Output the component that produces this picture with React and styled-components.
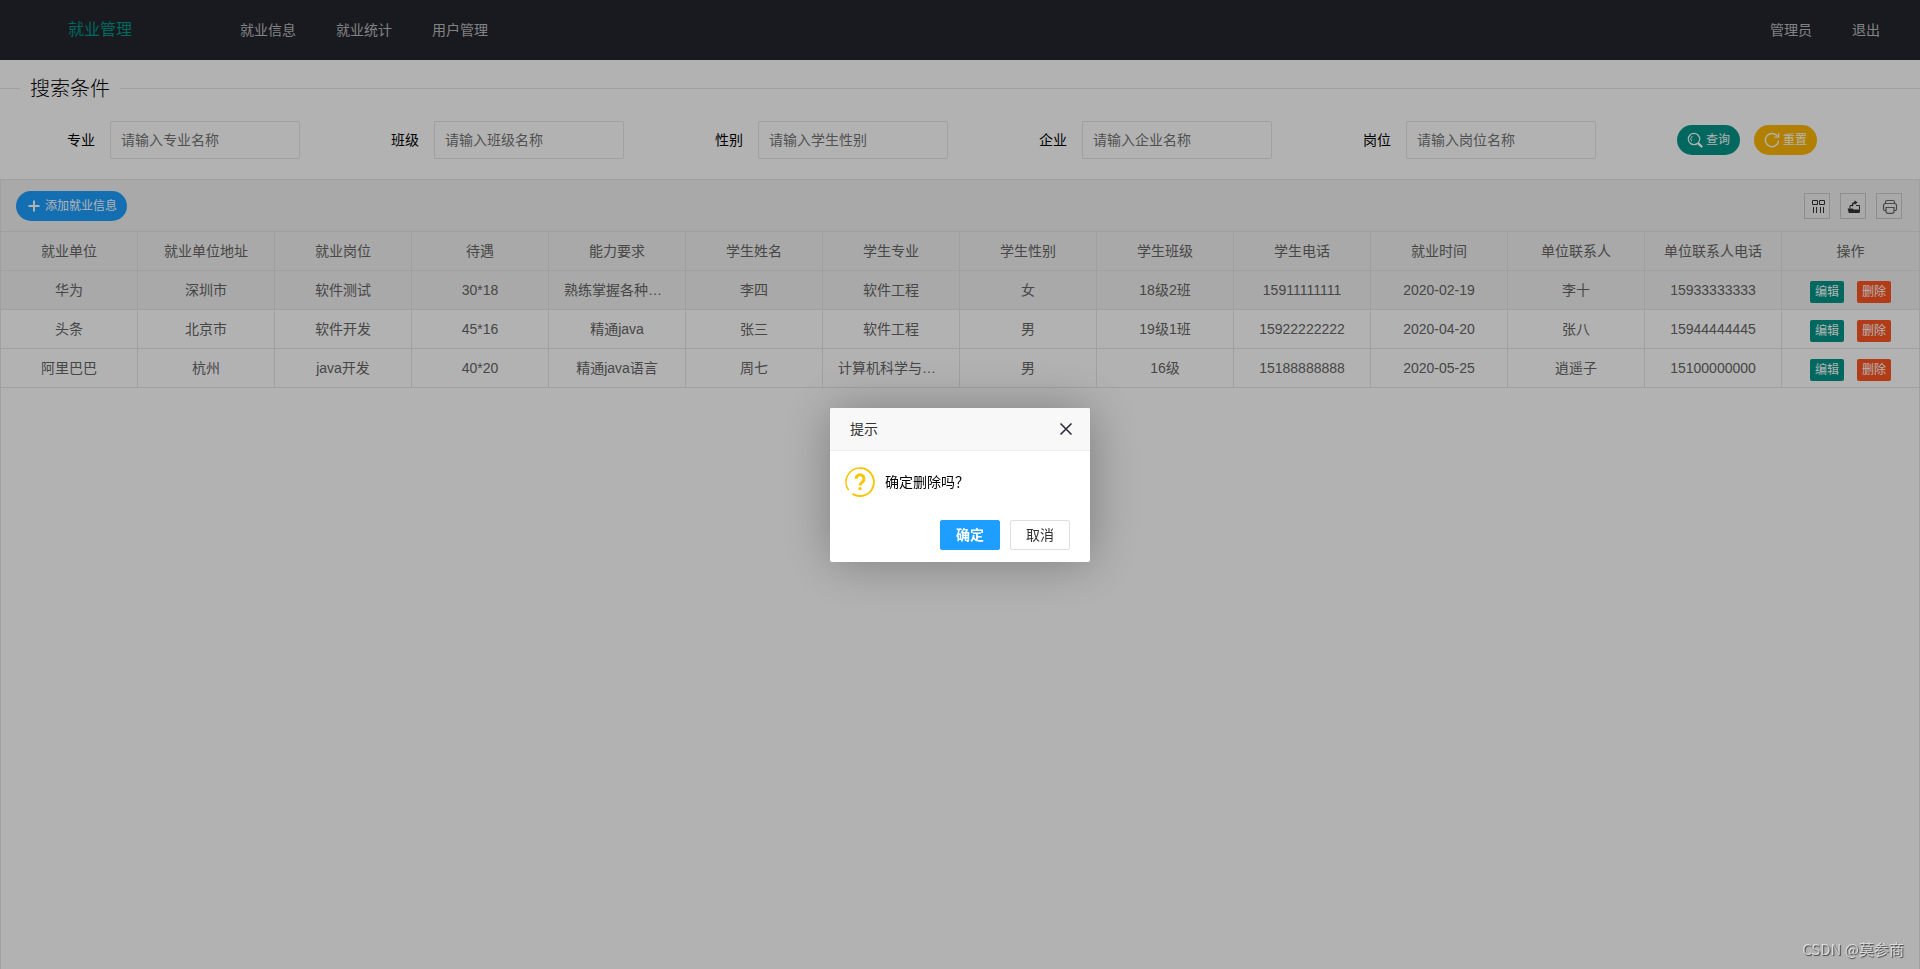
import React from "react";
import styled, { createGlobalStyle } from "styled-components";

const GlobalStyle = createGlobalStyle`
  * { box-sizing: border-box; }
  html, body { margin: 0; padding: 0; }
  body, button, input {
    font-family: "Liberation Sans", Arial, "Noto Sans CJK SC", sans-serif;
    font-size: 14px;
  }
  body { background: #fff; color: #000; line-height: 24px; overflow: hidden; }
`;

const Page = styled.div`
  display: flex;
  flex-direction: column;
  min-height: 100vh;
`;

const Header = styled.header`
  display: flex;
  align-items: center;
  height: 60px;
  flex: none;
  padding-right: 20px;
  background: #23262e;
`;

const Logo = styled.h1`
  width: 200px;
  margin: 0;
  font-size: 16px;
  font-weight: 400;
  line-height: 60px;
  text-align: center;
  color: #009688;
`;

const Nav = styled.nav`
  display: flex;
  padding-left: ${(p) => (p.$end ? 0 : 20)}px;
  margin-left: ${(p) => (p.$end ? "auto" : 0)};
`;

const NavLink = styled.a`
  padding: 0 20px;
  line-height: 60px;
  color: rgba(255, 255, 255, 0.7);
  text-decoration: none;
`;

const SearchField = styled.fieldset`
  margin: 12px 0 17px;
  padding: 0;
  border: 0;
  border-top: 1px solid #e6e6e6;
`;

const Legend = styled.legend`
  margin-left: 20px;
  padding: 2px 10px 0;
  font-size: 20px;
  font-weight: 300;
  line-height: 30px;
`;

const SearchForm = styled.form`
  display: flex;
  align-items: center;
  gap: 24px;
  margin-bottom: 20px;
`;

const Field = styled.div`
  display: flex;
  align-items: center;
`;

const FieldLabel = styled.label`
  width: 110px;
  padding: 0 15px;
  text-align: right;
`;

const TextInput = styled.input`
  width: 190px;
  height: 38px;
  padding: 0 0 0 10px;
  border: 1px solid #e6e6e6;
  border-radius: 2px;
  background: #fff;
  &::placeholder { color: #757575; opacity: 1; }
`;

const FormActions = styled.div`
  display: flex;
  gap: 14px;
  margin-left: 57px;
`;

const PillButton = styled.button`
  display: flex;
  align-items: center;
  gap: 3px;
  height: 30px;
  padding: 0 10px;
  border: 0;
  border-radius: 15px;
  background: ${(p) => p.$color};
  color: #fff;
  font-size: 12px;
  line-height: 30px;
  white-space: nowrap;
  svg { width: 16px; height: 16px; flex: none; }
`;

const TableView = styled.section`
  flex: 1;
  border: 1px solid #e6e6e6;
  border-bottom: 0;
`;

const Toolbar = styled.div`
  display: flex;
  align-items: center;
  justify-content: space-between;
  height: 52px;
  padding: 0 17px 0 15px;
  border-bottom: 1px solid #e6e6e6;
  background: #f2f2f2;
`;

const ToolIcons = styled.div`
  display: flex;
  gap: 10px;
`;

const ToolButton = styled.button`
  display: flex;
  align-items: center;
  justify-content: center;
  width: 26px;
  height: 26px;
  padding: 0;
  border: 1px solid #ccc;
  background: transparent;
  color: #333;
  svg { width: 16px; height: 16px; overflow: visible; }
`;

const Table = styled.table`
  width: 100%;
  table-layout: fixed;
  border-collapse: separate;
  border-spacing: 0;
  color: #666;
`;

const Row = styled.tr`
  background: ${(p) => (p.$shaded ? "#f2f2f2" : "#fff")};
`;

const HeadCell = styled.th`
  height: 39px;
  padding: 0 2px;
  border: solid #e6e6e6;
  border-width: 0 1px 1px 0;
  font-weight: 400;
  text-align: center;
  white-space: nowrap;
  &:last-child { border-right: 0; }
`;

const Cell = styled.td`
  height: 39px;
  padding: 0 15px;
  border: solid #e6e6e6;
  border-width: 0 1px 1px 0;
  text-align: center;
  overflow: hidden;
  text-overflow: ellipsis;
  white-space: nowrap;
  &:last-child { border-right: 0; }
`;

const RowActions = styled.div`
  display: flex;
  justify-content: center;
  gap: 13px;
  padding-top: 4px;
`;

const MiniButton = styled.button`
  height: 22px;
  padding: 0 5px;
  border: 0;
  border-radius: 2px;
  background: ${(p) => p.$color};
  color: #fff;
  font-size: 12px;
  line-height: 22px;
`;

const Mask = styled.div`
  position: fixed;
  inset: 0;
  display: flex;
  align-items: center;
  justify-content: center;
  background: rgba(0, 0, 0, 0.3);
`;

const Dialog = styled.div`
  width: 260px;
  border-radius: 2px;
  background: #fff;
  box-shadow: 1px 1px 50px rgba(0, 0, 0, 0.3);
`;

const DialogTitle = styled.div`
  display: flex;
  align-items: center;
  justify-content: space-between;
  height: 43px;
  padding: 0 16px 0 20px;
  border-bottom: 1px solid #eee;
  border-radius: 2px 2px 0 0;
  background: #f8f8f8;
  color: #333;
  line-height: 22px;
`;

const CloseButton = styled.button`
  display: flex;
  padding: 0;
  border: 0;
  background: transparent;
  color: #2e2d3c;
`;

const DialogBody = styled.div`
  display: flex;
  align-items: center;
  gap: 10px;
  padding: 16px 15px 18px;
`;

const DialogFooter = styled.div`
  display: flex;
  justify-content: flex-end;
  gap: 10px;
  padding: 5px 20px 12px;
`;

const DialogButton = styled.button`
  width: 60px;
  height: 30px;
  padding: 0 0 2px;
  border: 1px solid ${(p) => (p.$primary ? "#1e9fff" : "#dedede")};
  border-radius: 2px;
  background: ${(p) => (p.$primary ? "#1e9fff" : "#fff")};
  color: ${(p) => (p.$primary ? "#fff" : "#333")};
  font-weight: ${(p) => (p.$primary ? 700 : 400)};
`;

const Watermark = styled.div`
  position: fixed;
  right: 16px;
  bottom: 8px;
  font-family: "Noto Sans CJK SC", sans-serif;
  font-size: 15px;
  color: rgba(255, 255, 255, 0.6);
  text-shadow: 1px 1px 1px rgba(0, 0, 0, 0.6);
`;

const SearchIcon = () => (
  <svg viewBox="0 0 16 16" fill="none" stroke="currentColor" strokeLinecap="round">
    <circle cx="7" cy="7" r="5.7" strokeWidth="1.2" />
    <path d="M4.4 9A3.300 3.300 0 0 1 5 4.400" strokeWidth="1" />
    <path d="M11.800 11.800l2.700 2.700" strokeWidth="2.400" />
  </svg>
);

const RefreshIcon = () => (
  <svg viewBox="0 0 16 16" fill="none" stroke="currentColor" strokeWidth="1.3">
    <path d="M14.6 8.6A6.6 6.6 0 1 1 13.2 4" />
    <path d="M14.6 1.2v4h-4.2" />
  </svg>
);

const PlusIcon = () => (
  <svg viewBox="0 0 16 16" fill="none" stroke="currentColor" strokeWidth="2">
    <path d="M8 2.5v11M2.5 8h11" />
  </svg>
);

const ColumnsIcon = () => (
  <svg viewBox="0 0 16 16" fill="none" stroke="currentColor" strokeWidth="1">
    <path d="M3.5 2.5h5v4h-5zM10.5 2.5h5v4h-5zM4.5 9v6M7.5 9v6M11.5 9v6M14.5 9v6" />
  </svg>
);

const ExportIcon = () => (
  <svg viewBox="0 0 16 16" fill="none" stroke="currentColor" strokeWidth="1">
    <path d="M2.600 10.400h5l1 1H15.200l-.6 3.600H3.800z" fill="currentColor" stroke="none" />
    <path d="M5 10.500V7.500H7.500M11 7.500h3.500V11.500" />
    <path d="M7.300 8.200C7.300 5.800 8 4.700 10 4.500" strokeWidth="1.500" />
    <path d="M9.600 2.200l3 2.300-3 2.300z" fill="currentColor" stroke="none" />
  </svg>
);

const PrintIcon = () => (
  <svg viewBox="0 0 16 16" fill="none" stroke="#666" strokeWidth="1.2">
    <path d="M4.500 5.500V4A1.500 1.500 0 0 1 6 2.500h6A1.500 1.500 0 0 1 13.500 4v1.500" />
    <path d="M5 12.500H4A1.500 1.500 0 0 1 2.500 11V7.500a2 2 0 0 1 2-2h9a2 2 0 0 1 2 2V11A1.500 1.500 0 0 1 14 12.500H13" />
    <path d="M5 9.500h8v4a1.800 1.800 0 0 1-1.800 1.800H6.800A1.800 1.800 0 0 1 5 13.500z" />
  </svg>
);

const CloseIcon = () => (
  <svg width="16" height="16" viewBox="0 0 16 16" fill="none" stroke="currentColor" strokeWidth="1.6">
    <path d="M2.500 2.500l11 11M13.500 2.500l-11 11" />
  </svg>
);

const QuestionIcon = () => (
  <svg width="30" height="30" viewBox="0 0 30 30" fill="none" stroke="#f7c600">
    <path d="M3.700 23.200A14 14 0 0 1 15 1" strokeWidth="1.500" />
    <path d="M15 1A14 14 0 1 1 7.500 26.900" strokeWidth="1.900" />
    <path d="M11 11.800a4 4 0 1 1 6.500 3.100c-1.500 1.200-2.500 1.700-2.500 3.600" strokeWidth="3" />
    <circle cx="15" cy="21.600" r="1.700" fill="#f7c600" stroke="none" />
  </svg>
);

const FIELDS = [
  ["major", "专业", "请输入专业名称"],
  ["class", "班级", "请输入班级名称"],
  ["gender", "性别", "请输入学生性别"],
  ["company", "企业", "请输入企业名称"],
  ["post", "岗位", "请输入岗位名称"],
];

const COLUMNS = [
  "就业单位", "就业单位地址", "就业岗位", "待遇", "能力要求", "学生姓名", "学生专业",
  "学生性别", "学生班级", "学生电话", "就业时间", "单位联系人", "单位联系人电话", "操作",
];

const ROWS = [
  ["华为", "深圳市", "软件测试", "30*18", "熟练掌握各种工具", "李四", "软件工程", "女", "18级2班", "15911111111", "2020-02-19", "李十", "15933333333"],
  ["头条", "北京市", "软件开发", "45*16", "精通java", "张三", "软件工程", "男", "19级1班", "15922222222", "2020-04-20", "张八", "15944444445"],
  ["阿里巴巴", "杭州", "java开发", "40*20", "精通java语言", "周七", "计算机科学与技术", "男", "16级", "15188888888", "2020-05-25", "逍遥子", "15100000000"],
];

export default function App() {
  return (
    <>
      <GlobalStyle />
      <Page>
        <Header>
          <Logo>就业管理</Logo>
          <Nav>
            <NavLink href="#info">就业信息</NavLink>
            <NavLink href="#stats">就业统计</NavLink>
            <NavLink href="#users">用户管理</NavLink>
          </Nav>
          <Nav $end>
            <NavLink href="#admin">管理员</NavLink>
            <NavLink href="#logout">退出</NavLink>
          </Nav>
        </Header>
        <SearchField>
          <Legend>搜索条件</Legend>
        </SearchField>
        <SearchForm>
          {FIELDS.map(([id, label, hint]) => (
            <Field key={id}>
              <FieldLabel htmlFor={id}>{label}</FieldLabel>
              <TextInput id={id} type="text" placeholder={hint} />
            </Field>
          ))}
          <FormActions>
            <PillButton type="button" $color="#009688"><SearchIcon />查询</PillButton>
            <PillButton type="reset" $color="#ffb800"><RefreshIcon />重置</PillButton>
          </FormActions>
        </SearchForm>
        <TableView>
          <Toolbar>
            <PillButton type="button" $color="#1e9fff"><PlusIcon />添加就业信息</PillButton>
            <ToolIcons>
              <ToolButton type="button" aria-label="筛选列"><ColumnsIcon /></ToolButton>
              <ToolButton type="button" aria-label="导出"><ExportIcon /></ToolButton>
              <ToolButton type="button" aria-label="打印"><PrintIcon /></ToolButton>
            </ToolIcons>
          </Toolbar>
          <Table>
            <thead>
              <Row $shaded>
                {COLUMNS.map((c) => <HeadCell key={c} scope="col">{c}</HeadCell>)}
              </Row>
            </thead>
            <tbody>
              {ROWS.map((row, r) => (
                <Row key={row[0]} $shaded={r === 0}>
                  {row.map((text, i) => <Cell key={i}>{text}</Cell>)}
                  <Cell>
                    <RowActions>
                      <MiniButton type="button" $color="#009688">编辑</MiniButton>
                      <MiniButton type="button" $color="#ff5722">删除</MiniButton>
                    </RowActions>
                  </Cell>
                </Row>
              ))}
            </tbody>
          </Table>
        </TableView>
      </Page>
      <Mask>
        <Dialog role="dialog" aria-modal="true" aria-labelledby="dialog-title">
          <DialogTitle>
            <span id="dialog-title">提示</span>
            <CloseButton type="button" aria-label="关闭"><CloseIcon /></CloseButton>
          </DialogTitle>
          <DialogBody>
            <QuestionIcon />
            <span>确定删除吗？</span>
          </DialogBody>
          <DialogFooter>
            <DialogButton type="button" $primary>确定</DialogButton>
            <DialogButton type="button">取消</DialogButton>
          </DialogFooter>
        </Dialog>
      </Mask>
      <Watermark>CSDN @莫参商</Watermark>
    </>
  );
}
